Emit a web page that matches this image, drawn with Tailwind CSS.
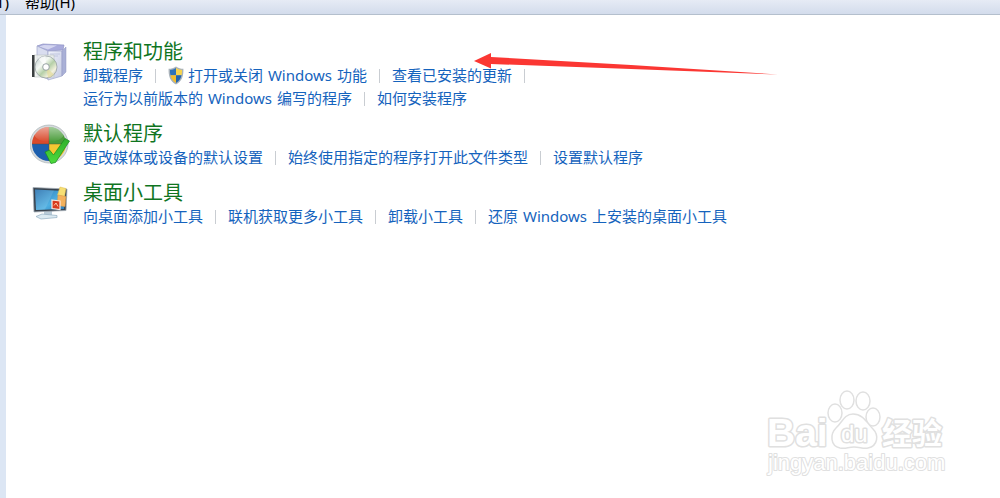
<!DOCTYPE html>
<html lang="zh-CN">
  <head>
    <meta charset="UTF-8" />
    <meta name="viewport" content="width=device-width, initial-scale=1.0" />
    <title>程序</title>
    <script src="https://cdn.jsdelivr.net/npm/@tailwindcss/browser@4"></script>
  </head>
  <body
    class="relative flex min-h-screen flex-col overflow-x-hidden bg-white font-['Noto_Sans','Noto_Sans_CJK_SC',sans-serif] text-[15px] leading-[23px]"
  >
    <!-- Menu bar -->
    <nav
      class="flex h-[15px] items-end gap-4 overflow-hidden border-b border-[#b4bfcd] bg-linear-to-b from-[#e6ebf5] to-[#d3dcec] text-black"
    >
      <button class="flex w-[9px] justify-end">T)</button>
      <button>帮助(H)</button>
    </nav>

    <div class="flex grow">
      <div class="w-[6px] bg-[#dce6f4]"></div>

      <main class="flex flex-col gap-3 px-6 pt-[25px]">
        <!-- Programs and features -->
        <section class="flex gap-[13px]">
          <svg class="mt-0.5 size-10 shrink-0" viewBox="0 0 40 40">
            <defs>
              <linearGradient id="box" x1="0" y1="0" x2="1" y2="1">
                <stop offset="0" stop-color="#f1f3fb" />
                <stop offset="1" stop-color="#c3c9e2" />
              </linearGradient>
              <linearGradient id="disc" x1="0" y1="0" x2="1" y2="1">
                <stop offset="0" stop-color="#b9c6c8" />
                <stop offset="0.35" stop-color="#f5f9f4" />
                <stop offset="0.55" stop-color="#b5cfa8" />
                <stop offset="0.75" stop-color="#f3f1dd" />
                <stop offset="1" stop-color="#b0b9bc" />
              </linearGradient>
            </defs>
            <path d="M7 4 13 2l21 1-1 5-15 1z" fill="#a9abdc" stroke="#9195c6" stroke-width=".7" />
            <path d="M9 4.500 14 3l13 .5-9 4z" fill="#d4d6f0" />
            <path d="M7 4 18 9v28L7 33z" fill="#d9ddef" stroke="#a2a8cb" stroke-width=".7" />
            <path d="M18 9h14v25l-14 4z" fill="url(#box)" stroke="#a2a8cb" stroke-width=".7" />
            <path d="m32 9 4-4v25l-4 4z" fill="#a9b0d6" stroke="#9197c2" stroke-width=".5" />
            <path d="M20 12h10M20 14h8" stroke="#b9bfdc" stroke-width=".8" />
            <path d="M4 13h20v22H4z" fill="#edf1ec" fill-opacity=".75" stroke="#b2b8b8" stroke-width=".5" />
            <path d="M2 13h2.500v22H2z" fill="#3b3f40" />
            <circle cx="16" cy="25" r="11" fill="url(#disc)" stroke="#8f999c" stroke-width=".7" />
            <path d="M16 25 8.500 17a11 11 0 0 1 7-3z" fill="#fff" fill-opacity=".7" />
            <path d="m16 25 8 7.500a11 11 0 0 1-6 3.300z" fill="#e3dc9c" fill-opacity=".7" />
            <circle cx="16" cy="25" r="3.300" fill="#fff" stroke="#8f999c" stroke-width=".9" />
          </svg>
          <div>
            <h2 class="text-xl leading-6 text-[#0f751f]">程序和功能</h2>
            <div class="flex items-center gap-3 text-[#1563bd]">
              <a href="#">卸载程序</a>
              <span class="h-3.5 w-px bg-[#c9cdd2]"></span>
              <a href="#" class="flex items-center gap-1">
                <svg class="h-[19px] w-4" viewBox="0 0 16 19">
                  <path d="M8 .5C5.800 2 3.200 2.800.6 2.800.3 10 2 15.500 8 18.500 14 15.500 15.700 10 15.400 2.800 12.800 2.800 10.200 2 8 .5z" fill="#a9b2ba" />
                  <path d="M8 2C6.200 3.200 4 3.900 2 4c-.1 2 0 3.700.5 5.300H8z" fill="#2f72b9" />
                  <path d="M8 2c1.800 1.200 4 1.900 6 2 .1 2 0 3.700-.5 5.300H8z" fill="#f7d34c" />
                  <path d="M2.500 9.300H8V17c-3-1.600-4.800-4.200-5.500-7.700z" fill="#f3bd2e" />
                  <path d="M13.500 9.300H8V17c3-1.600 4.800-4.200 5.500-7.700z" fill="#2464ac" />
                </svg>
                <span>打开或关闭 <span class="px-px">Windows</span> 功能</span>
              </a>
              <span class="h-3.5 w-px bg-[#c9cdd2]"></span>
              <a href="#">查看已安装的更新</a>
              <span class="h-3.5 w-px bg-[#c9cdd2]"></span>
            </div>
            <div class="flex items-center gap-3 text-[#1563bd]">
              <a href="#">运行为以前版本的 <span class="px-px">Windows</span> 编写的程序</a>
              <span class="h-3.5 w-px bg-[#c9cdd2]"></span>
              <a href="#">如何安装程序</a>
            </div>
          </div>
        </section>

        <!-- Default programs -->
        <section class="flex gap-[13px]">
          <svg class="mt-0.5 size-10 shrink-0" viewBox="0 0 40 40">
            <defs>
              <clipPath id="ball"><circle cx="19" cy="20" r="17" /></clipPath>
              <linearGradient id="gloss" x1="0" y1="0" x2="0" y2="1">
                <stop offset="0" stop-color="#fff" stop-opacity=".6" />
                <stop offset="1" stop-color="#fff" stop-opacity="0" />
              </linearGradient>
              <linearGradient id="tick" x1="0" y1="0" x2="0" y2="1">
                <stop offset="0" stop-color="#2fae2c" />
                <stop offset="1" stop-color="#4ddb3c" />
              </linearGradient>
            </defs>
            <circle cx="19" cy="20" r="19" fill="#d5dadd" stroke="#a9b2b4" stroke-width=".7" />
            <g clip-path="url(#ball)">
              <path d="M0 0h19v20H0z" fill="#d94a2c" />
              <path d="M19 0h20v20H19z" fill="#4a9c3a" />
              <path d="M0 20h19v20H0z" fill="#1c5fae" />
              <path d="M19 20h20v20H19z" fill="#f6c832" />
              <path d="M19 2v36M1 20h36" stroke="#5b4b38" stroke-opacity=".45" />
              <ellipse cx="19" cy="9" rx="15" ry="9" fill="url(#gloss)" />
            </g>
            <path d="m15 28 4.500-2 4 5L35 14.500l4.500 2.500-14 21.500-4.500 1z" fill="url(#tick)" stroke="#178a1c" stroke-width=".7" />
          </svg>
          <div>
            <h2 class="text-xl leading-6 text-[#0f751f]">默认程序</h2>
            <div class="flex items-center gap-3 text-[#1563bd]">
              <a href="#">更改媒体或设备的默认设置</a>
              <span class="h-3.5 w-px bg-[#c9cdd2]"></span>
              <a href="#">始终使用指定的程序打开此文件类型</a>
              <span class="h-3.5 w-px bg-[#c9cdd2]"></span>
              <a href="#">设置默认程序</a>
            </div>
          </div>
        </section>

        <!-- Desktop gadgets -->
        <section class="flex gap-[13px]">
          <svg class="mt-0.5 size-10 shrink-0" viewBox="0 0 40 40">
            <defs>
              <linearGradient id="screen" x1="0" y1="0" x2="1" y2="1">
                <stop offset="0" stop-color="#256fae" />
                <stop offset=".6" stop-color="#4fb0e2" />
                <stop offset="1" stop-color="#2978b8" />
              </linearGradient>
            </defs>
            <path d="M14 27h8v6h-8z" fill="#b9cbd8" />
            <path d="m6 33.500 6-2.500 15 1.500v2L11 36z" fill="#dbeaf2" stroke="#91aec1" stroke-width=".7" />
            <path d="M3 4.500 37 6l-1 21.500L4 29z" fill="#39434e" stroke="#a4afb8" stroke-width=".8" />
            <path d="M5 6.500 35 8l-1 18L6 27z" fill="url(#screen)" />
            <path d="M5 6.500 24 7.500 15 26.500 6 27z" fill="#fff" fill-opacity=".12" />
            <path d="m30 4 6 1.500-1.500 8-7-1.500z" fill="#f7df74" stroke="#dfbd4b" stroke-width=".5" />
            <path d="m28 12 8 1.500-1 10-8-1z" fill="#f4b15c" stroke="#e09b45" stroke-width=".5" />
            <path d="m22 17 8 1v8.500l-8-1z" fill="#d8391d" stroke="#fbe9df" stroke-width="1.200" />
            <path d="M24 22.500 26 20l2 3.500" fill="none" stroke="#fbc9a8" />
          </svg>
          <div>
            <h2 class="text-xl leading-6 text-[#0f751f]">桌面小工具</h2>
            <div class="flex items-center gap-3 text-[#1563bd]">
              <a href="#">向桌面添加小工具</a>
              <span class="h-3.5 w-px bg-[#c9cdd2]"></span>
              <a href="#">联机获取更多小工具</a>
              <span class="h-3.5 w-px bg-[#c9cdd2]"></span>
              <a href="#">卸载小工具</a>
              <span class="h-3.5 w-px bg-[#c9cdd2]"></span>
              <a href="#">还原 <span class="px-px">Windows</span> 上安装的桌面小工具</a>
            </div>
          </div>
        </section>
      </main>
    </div>

    <!-- Red arrow pointing at the heading -->
    <svg class="absolute top-[50px] left-[474px] h-7 w-[306px]" viewBox="0 0 306 28">
      <path d="M0 11 17 3v4l140 8 147 9.500-147-5.500-140-5v4.500z" fill="#fb3733" />
    </svg>

    <!-- Watermark -->
    <svg
      class="absolute right-[50px] bottom-[14px] h-[94px] w-[190px] font-['Liberation_Sans','Noto_Sans_CJK_SC',sans-serif]"
      viewBox="0 0 190 94"
      fill="#fff"
      stroke="#e0e0e0"
      stroke-width="1.500"
      stroke-linejoin="round"
    >
      <text x="7" y="56" font-size="39" font-weight="700" paint-order="stroke" stroke-width="3">Bai</text>
      <ellipse cx="75" cy="23" rx="7" ry="9" />
      <ellipse cx="87" cy="10" rx="7" ry="9" />
      <ellipse cx="103" cy="11" rx="7" ry="9" />
      <ellipse cx="113" cy="27" rx="7" ry="9" />
      <path d="M93 24c-9 0-11 9-17 14-6 6-6 18 4 20 6 1 8-1 14-1s9 2 14 1c10-2 11-13 5-19-6-6-10-15-20-15z" />
      <text x="81" y="52" font-size="24" paint-order="stroke" stroke-width="3">du</text>
      <text x="122" y="54" font-size="30" font-weight="700" paint-order="stroke" stroke-width="3">经验</text>
      <text x="8" y="80" font-size="22" paint-order="stroke" stroke-width="2">jingyan.baidu.com</text>
    </svg>
  </body>
</html>
